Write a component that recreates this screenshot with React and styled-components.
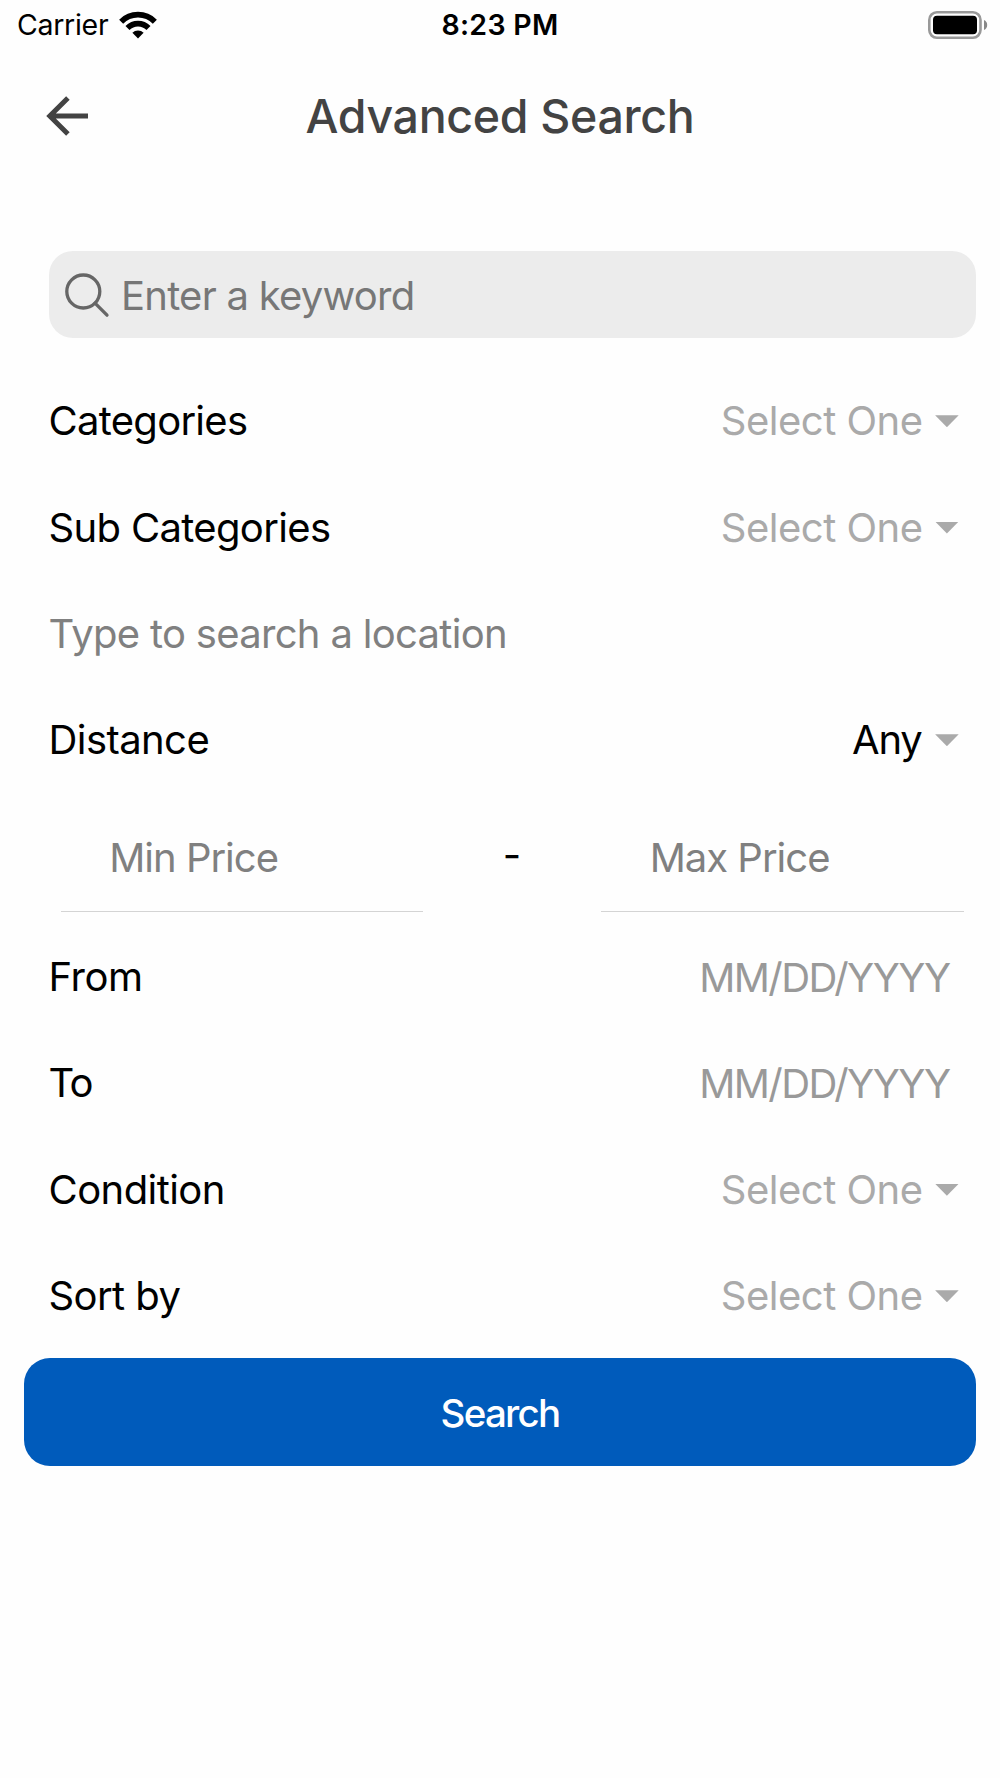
import React from 'react';
import styled, { createGlobalStyle } from 'styled-components';

const filters = [
    { label: 'Categories', value: 'Select One', type: 'select', spacing: -0.72 },
    { label: 'Sub Categories', value: 'Select One', type: 'select', spacing: -0.66 },
    { label: 'Type to search a location', type: 'location', spacing: -0.69 },
    { label: 'Distance', value: 'Any', type: 'select', picked: true },
];

const moreFilters = [
    { label: 'From', value: 'MM/DD/YYYY', type: 'date', spacing: -0.4 },
    { label: 'To', value: 'MM/DD/YYYY', type: 'date', spacing: -1.8 },
    { label: 'Condition', value: 'Select One', type: 'select' },
    { label: 'Sort by', value: 'Select One', type: 'select' },
];

function StatusBar() {
    return (
        <Status>
            <Carrier>
                <span>Carrier</span>
                <svg width="38" height="28" viewBox="0 0 38 28">
                    <g fill="none" stroke="#000">
                        <path d="M2.15 10.65a23.83 23.83 0 0 1 33.7 0" strokeWidth="5.7" />
                        <path d="M8.5 17a14.85 14.85 0 0 1 21 0" strokeWidth="5.7" />
                    </g>
                    <path d="M19 27.5l-5.6-5.8a8 8 0 0 1 11.2 0z" />
                </svg>
            </Carrier>
            <Clock>8:23 PM</Clock>
            <Battery>
                <svg width="60" height="28" viewBox="0 0 60 28">
                    <rect x="1.3" y="1.3" width="51.2" height="25.4" rx="7.6" fill="none" stroke="#999" strokeWidth="2.6" />
                    <rect x="5" y="4.8" width="44" height="18.4" rx="4" />
                    <path d="M56 9v10c2-.8 3.2-2.7 3.2-5s-1.2-4.2-3.2-5z" fill="#888" />
                </svg>
            </Battery>
        </Status>
    );
}

function FilterRow({ label, value, type, picked, spacing }) {
    return (
        <Row>
            <Label $muted={type === 'location'} $spacing={spacing}>{label}</Label>
            {type === 'select' && (
                <Select $picked={picked}>
                    {value}
                    <Caret />
                </Select>
            )}
            {type === 'date' && <DateValue>{value}</DateValue>}
        </Row>
    );
}

function App() {
    return (
        <Page>
            <GlobalStyle />
            <StatusBar />
            <Header>
                <BackButton aria-label="Back">
                    <svg width="44" height="44" viewBox="0 0 44 44" fill="none" stroke="#434343" strokeWidth="5">
                        <path d="M23.9 3.9L5.8 22l18.1 18.1M6 22h38" />
                    </svg>
                </BackButton>
                <Title>Advanced Search</Title>
            </Header>
            <SearchBox>
                <svg width="46" height="46" viewBox="0 0 46 46" fill="none" stroke="#666" strokeWidth="3.3">
                    <circle cx="19.3" cy="19.5" r="16.5" />
                    <path d="M31 31.2l12 12" strokeLinecap="round" />
                </svg>
                <Keyword>Enter a keyword</Keyword>
            </SearchBox>
            <Form>
                {filters.map((item) => <FilterRow key={item.label} {...item} />)}
                <PriceRow>
                    <PriceField>Min Price</PriceField>
                    <Dash>-</Dash>
                    <PriceField>Max Price</PriceField>
                </PriceRow>
                {moreFilters.map((item) => <FilterRow key={item.label} {...item} />)}
            </Form>
            <SearchButton>Search</SearchButton>
        </Page>
    );
}

export default App

const GlobalStyle = createGlobalStyle`
*{
box-sizing:border-box;
}
body{
margin:0;
background:#fefefe;
}
`
const Page = styled.div`
width:1000px;
height:1778px;
overflow:hidden;
display:flex;
flex-direction:column;
background:#fefefe;
color:#000;
font-family:Inter, "Liberation Sans", sans-serif;
font-size:40px;
line-height:1.2;
white-space:nowrap;
`
const Status = styled.div`
height:53px;
display:grid;
grid-template-columns:1fr auto 1fr;
padding:0 12px 4px;
align-items:center;
font-size:28.5px;
`
const Carrier = styled.div`
display:flex;
align-items:center;
gap:11px;
height:50px;
padding-left:5px;
letter-spacing:-0.3px;

span{
padding-top:1px;
}
`
const Clock = styled.div`
padding-top:1px;
font-weight:600;
letter-spacing:0.3px;
`
const Battery = styled.div`
display:flex;
justify-content:flex-end;
`
const Header = styled.header`
height:126px;
display:grid;
grid-template-columns:1fr auto 1fr;
align-items:center;
padding:0 44px;
`
const BackButton = styled.button`
display:flex;
padding:0;
border:0;
background:none;
`
const Title = styled.h1`
margin:0;
padding-top:2px;
font-size:46.5px;
font-weight:500;
letter-spacing:-0.33px;
color:#434343;
`
const SearchBox = styled.div`
display:flex;
align-items:center;
height:87px;
margin:72px 24.5px 0 48.5px;
padding-left:15.5px;
border-radius:24px;
background:#ececec;
`
const Keyword = styled.span`
margin-left:11px;
padding-top:2px;
letter-spacing:-0.75px;
color:#777;
`
const Form = styled.div`
margin-top:30px;
padding:0 24.5px 0 48.5px;
`
const Row = styled.div`
display:flex;
align-items:center;
justify-content:space-between;
height:106.4px;
`
const Label = styled.span`
letter-spacing:${props => props.$spacing ?? -0.57}px;
color:${props => props.$muted ? '#808080' : '#000'};
`
const Select = styled.div`
display:flex;
align-items:center;
gap:${props => props.$picked ? 13.5 : 12.6}px;
margin-right:16.8px;
letter-spacing:${props => props.$picked ? -1.2 : -0.5}px;
color:${props => props.$picked ? '#000' : '#aaa'};
`
//down pointing triangle
const Caret = styled.i`
width:23.6px;
height:12px;
background:#aaa;
clip-path:polygon(0 0, 100% 0, 50% 100%);
`
const DateValue = styled.span`
margin-right:26px;
padding-top:1px;
letter-spacing:-1.55px;
color:#999;
`
const PriceRow = styled.div`
display:flex;
justify-content:space-between;
height:130.3px;
padding:11px 12px 0;
`
const PriceField = styled.div`
width:362.5px;
height:107px;
padding-left:48.7px;
line-height:106px;
letter-spacing:-1px;
color:#808080;
border-bottom:1px solid #d4d4d4;
`
const Dash = styled.span`
line-height:99px;
`
const SearchButton = styled.button`
flex:none;
height:108.5px;
margin:8.3px 24px 0;
padding-top:3px;
border:0;
border-radius:26px;
background:#005bbb;
color:#fff;
font:inherit;
font-size:38.5px;
font-weight:500;
letter-spacing:-1.7px;
`
